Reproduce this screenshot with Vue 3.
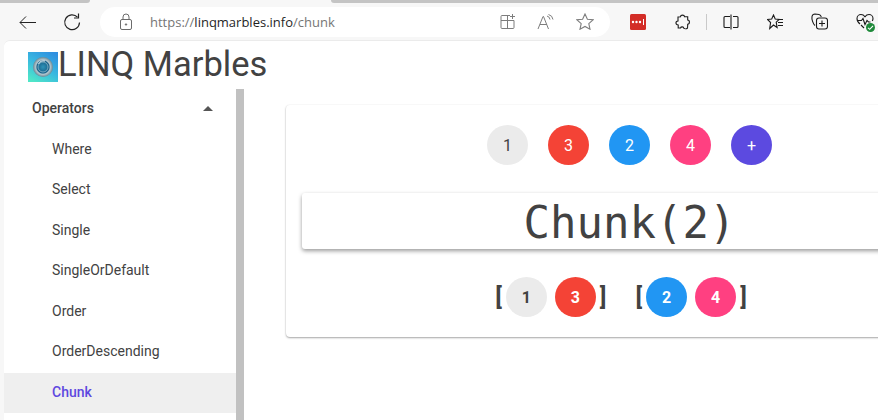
<template>
  <div class="window">
    <!-- browser chrome -->
    <div class="tabstrip">
      <span class="tab-edge left"></span>
      <span class="tab-edge right"></span>
    </div>
    <div class="toolbar">
      <button class="nav-btn">
        <svg width="20" height="20" viewBox="0 0 20 20" fill="none" stroke="#222" stroke-width="1">
          <path d="M2 10.500h16M8 4.500l-6 6 6 6" />
        </svg>
      </button>
      <button class="nav-btn reload">
        <svg width="20" height="20" viewBox="0 0 20 20" fill="none" stroke="#222" stroke-width="1.200">
          <path d="M15.500 5.200A7.400 7.400 0 1 0 17.500 10.500" />
          <path d="M16.500 1.500v4.500h-4.500" />
        </svg>
      </button>
      <div class="address">
        <svg class="lock" width="14" height="18" viewBox="0 0 14 18" fill="none" stroke="#6b6b6b" stroke-width="1">
          <rect x="1.500" y="6.500" width="11" height="10" rx="1.500" />
          <path d="M4 6.500V4a3 3 0 0 1 6 0v2.500" />
          <circle cx="7" cy="11.500" r="0.700" fill="#6b6b6b" />
        </svg>
        <span class="url"><span class="dim">https://</span>linqmarbles.info<span class="dim">/chunk</span></span>
        <div class="address-icons">
          <svg width="16" height="16" viewBox="0 0 16 16" fill="none" stroke="#7d7d7d" stroke-width="1">
            <path d="M10 1.500H2a1 1 0 0 0-1 1v11a1 1 0 0 0 1 1h11a1 1 0 0 0 1-1V6.500H1M7.500 1.500v13" />
            <path d="M12.500 0v5M10 2.500h5" />
          </svg>
          <svg width="18" height="16" viewBox="0 0 18 16" fill="none" stroke="#7d7d7d" stroke-width="1">
            <path d="M1 15L6 2.500h.5L11.500 15M3 10.500h7" />
            <path d="M10 2a4 4 0 0 1 3 3.500M11.500 0.500a6 6 0 0 1 4.500 5" />
          </svg>
          <svg width="18" height="17" viewBox="0 0 18 17" fill="none" stroke="#7d7d7d" stroke-width="1.100">
            <path d="M9 1l2.400 5.200 5.600.6-4.200 3.800 1.200 5.600L9 13.400l-5 2.800 1.200-5.600L1 6.800l5.600-.6z" />
          </svg>
        </div>
      </div>
      <div class="ext-icons">
        <svg class="ext lastpass" width="16" height="16" viewBox="0 0 16 16">
          <rect width="16" height="16" rx="1.500" fill="#d32d27" />
          <circle cx="3" cy="8" r="1.200" fill="#fff" />
          <circle cx="6.500" cy="8" r="1.200" fill="#fff" />
          <circle cx="10" cy="8" r="1.200" fill="#fff" />
          <rect x="13" y="5" width="1" height="6" fill="#fff" />
        </svg>
        <svg class="ext puzzle" width="16" height="16" viewBox="0 0 16 16" fill="none" stroke="#1c1c1c" stroke-width="1.100">
          <path d="M5.500 2.800c0-2.300 4-2.300 4 0h3.200v3.200c2.300 0 2.300 4.200 0 4.200 0 2.200-.2 3.800-.2 3.800-1 1-3 1-3.800.2 0-1.700-2.700-1.700-3.200-.2H3.200v-3c-2.900 0-3-3.800-.2-4V3z" />
        </svg>
        <span class="divider"></span>
        <svg class="ext split" width="16" height="16" viewBox="0 0 16 16" fill="none" stroke="#1c1c1c" stroke-width="1.100">
          <path d="M7 2.500H2a1 1 0 0 0-1 1v9a1 1 0 0 0 1 1h5M10 2.500h4a1 1 0 0 1 1 1v9a1 1 0 0 1-1 1h-4M8 0.500v15" />
        </svg>
        <svg class="ext favs" width="17" height="16" viewBox="0 0 17 16" fill="none" stroke="#1c1c1c" stroke-width="1.100">
          <path d="M6.500 1l1.700 4 4 .4-3 2.800.9 5.300-3.600-2.500-3.800 3.500.9-6L.5 5.500l4.200-.5z" />
          <path d="M11 5.500h5M11 8.500h5M11 11.500h5" />
        </svg>
        <svg class="ext collections" width="17" height="17" viewBox="0 0 17 17" fill="none" stroke="#1c1c1c" stroke-width="1.100">
          <path d="M4 12.500C2 11 .5 6 1 3.500 1.300 2 2.500 1 4 1l4 .5c1.300.2 2 1 2.300 2.500" />
          <rect x="5.500" y="5" width="11" height="11" rx="2.500" />
          <path d="M11 7.500v6M8 10.500h6" />
        </svg>
        <span class="health">
          <svg width="18" height="17" viewBox="0 0 18 17" fill="none" stroke="#1c1c1c" stroke-width="1.100">
            <path d="M4 11C2 9.500 1 8 1 5.500 1 3 3 1.500 5 1.500c1.700 0 3 .8 4 2.200 1-1.400 2.300-2.200 4-2.200 2 0 4 1.500 4 4 0 1-.3 1.800-.7 2.500" />
            <path d="M1 7.500h4.500l1.500-2 2 6 2-4 1.500 1.500h2" />
            <path d="M5 12l3 3" />
          </svg>
          <span class="ok">
            <svg width="7" height="7" viewBox="0 0 7 7" fill="none" stroke="#fff" stroke-width="1.100"><path d="M1 3.800l1.700 1.500L6 1.800" /></svg>
          </span>
        </span>
      </div>
    </div>

    <!-- page -->
    <div class="page">
      <header class="page-header">
        <svg class="logo" width="30" height="30" viewBox="0 0 30 30">
          <defs>
            <linearGradient id="logobg" x1="0.800" y1="0" x2="0.200" y2="1">
              <stop offset="0" stop-color="#2f8fe0" />
              <stop offset="0.500" stop-color="#39b8e0" />
              <stop offset="1" stop-color="#4fe6c8" />
            </linearGradient>
            <radialGradient id="marble">
              <stop offset="0" stop-color="#2f93b8" />
              <stop offset="0.600" stop-color="#17618a" />
              <stop offset="0.720" stop-color="#b5c8d0" />
              <stop offset="1" stop-color="#6a8794" />
            </radialGradient>
          </defs>
          <rect width="30" height="30" fill="url(#logobg)" />
          <circle cx="15" cy="15" r="10" fill="url(#marble)" />
          <circle cx="15" cy="15" r="5" fill="none" stroke="#9fc4d2" stroke-width="0.700" />
          <path d="M10.500 12a6 6 0 0 1 6.500-3" fill="none" stroke="#e6f2f6" stroke-width="1" />
        </svg>
        <h1>LINQ Marbles</h1>
      </header>

      <div class="page-body">
        <nav class="sidebar">
          <div class="group">
            <span>Operators</span>
            <i class="caret"></i>
          </div>
          <a
            v-for="item in operators"
            :key="item"
            class="nav-item"
            :class="{ active: item === selected }"
          >{{ item }}</a>
        </nav>

        <main class="content">
          <section class="card">
            <div class="marbles">
              <span
                v-for="m in source"
                :key="m.label"
                class="marble"
                :class="m.color"
              >{{ m.label }}</span>
            </div>
            <div class="banner">Chunk(2)</div>
            <div class="result">
              <div v-for="(chunk, i) in chunks" :key="i" class="chunk">
                <b class="bracket">[</b>
                <span
                  v-for="m in chunk"
                  :key="m.label"
                  class="marble bold"
                  :class="m.color"
                >{{ m.label }}</span>
                <b class="bracket">]</b>
              </div>
            </div>
          </section>
        </main>
      </div>
    </div>
  </div>
</template>

<script setup>
const operators = [
  'Where',
  'Select',
  'Single',
  'SingleOrDefault',
  'Order',
  'OrderDescending',
  'Chunk'
]
const selected = 'Chunk'

const source = [
  { label: '1', color: 'grey' },
  { label: '3', color: 'red' },
  { label: '2', color: 'blue' },
  { label: '4', color: 'pink' },
  { label: '+', color: 'purple' }
]

const chunks = [
  [{ label: '1', color: 'grey' }, { label: '3', color: 'red' }],
  [{ label: '2', color: 'blue' }, { label: '4', color: 'pink' }]
]
</script>

<style>
html, body {
  margin: 0;
  height: 100%;
  overflow: hidden;
  background: #fff;
}
</style>

<style scoped>
.window {
  width: 878px;
  height: 420px;
  display: flex;
  flex-direction: column;
  overflow: hidden;
  background: #f7f7f7;
  font-family: Roboto, sans-serif;
}

/* chrome */
.tabstrip {
  height: 3px;
  display: flex;
  justify-content: space-between;
  background: #f7f7f7;
}
.tab-edge {
  height: 3px;
  background: #c4c4c4;
}
.tab-edge.left {
  width: 90px;
  border-bottom-right-radius: 3px;
}
.tab-edge.right {
  width: 547px;
  border-bottom-left-radius: 3px;
}
.toolbar {
  height: 37px;
  flex: none;
  display: flex;
  align-items: center;
  padding-left: 18px;
  box-sizing: border-box;
}
.nav-btn {
  width: 20px;
  height: 20px;
  padding: 0;
  border: 0;
  background: none;
  display: flex;
}
.reload {
  margin-left: 24px;
}
.address {
  width: 510px;
  height: 30px;
  margin-left: 18px;
  box-sizing: border-box;
  background: #fff;
  border-radius: 15px;
  display: flex;
  align-items: center;
  padding-left: 19px;
}
.url {
  margin-left: 17px;
  font-family: "Open Sans", sans-serif;
  font-size: 13px;
  color: #1f1f1f;
}
.dim {
  color: #767676;
}
.address-icons {
  margin-left: auto;
  margin-right: 16px;
  display: flex;
  align-items: center;
  gap: 21px;
}
.ext-icons {
  display: flex;
  align-items: center;
  margin-left: 20px;
}
.ext {
  flex: none;
}
.puzzle {
  margin-left: 29px;
}
.divider {
  width: 1px;
  height: 16px;
  background: #c9c9c9;
  margin-left: 15px;
}
.split {
  margin-left: 16px;
}
.favs {
  margin-left: 28px;
}
.collections {
  margin-left: 27px;
}
.health {
  position: relative;
  display: flex;
  margin-left: 28px;
}
.ok {
  position: absolute;
  right: -1px;
  bottom: -2px;
  width: 9px;
  height: 9px;
  border-radius: 50%;
  background: #1f8a3b;
  display: flex;
  align-items: center;
  justify-content: center;
}

/* page */
.page {
  flex: 1;
  min-height: 0;
  margin-left: 4px;
  background: #fff;
  border-top: 1px solid #ebebeb;
  border-top-left-radius: 6px;
  display: flex;
  flex-direction: column;
}
.page-header {
  height: 48px;
  flex: none;
  display: flex;
  align-items: center;
  padding-left: 24px;
}
.logo {
  margin-top: 3px;
}
h1 {
  margin: 0;
  font-size: 34.500px;
  font-weight: 400;
  color: #424242;
  line-height: 48px;
  position: relative;
  top: -1px;
}
.page-body {
  flex: 1;
  min-height: 0;
  display: flex;
}
.sidebar {
  width: 232px;
  flex: none;
  border-right: 8px solid #c1c1c1;
  font-size: 14px;
  color: #424242;
}
.group {
  height: 40px;
  box-sizing: border-box;
  padding: 0 23px 2px 28px;
  display: flex;
  align-items: center;
  justify-content: space-between;
  font-weight: 500;
  margin-bottom: 0.500px;
}
.caret {
  width: 0;
  height: 0;
  border-left: 5px solid transparent;
  border-right: 5px solid transparent;
  border-bottom: 5px solid #555;
}
.nav-item {
  display: flex;
  align-items: center;
  height: 40.500px;
  box-sizing: border-box;
  padding: 0 0 2px 48px;
}
.nav-item.active {
  background: #efefef;
  color: #5e48e0;
  font-weight: 500;
}
.content {
  flex: 1;
  min-width: 0;
  padding: 16px 0 0 42px;
}
.card {
  width: 687px;
  height: 232px;
  box-sizing: border-box;
  padding: 20px 16px 0;
  background: #fff;
  border-radius: 4px;
  box-shadow: 0 1px 2px rgba(0, 0, 0, 0.35), 0 0 2px rgba(0, 0, 0, 0.05);
}
.marbles {
  display: flex;
  justify-content: center;
  gap: 20px;
}
.marble {
  width: 41px;
  height: 40px;
  border-radius: 50%;
  display: flex;
  align-items: center;
  justify-content: center;
  font-size: 16px;
  color: #fff;
  flex: none;
}
.marble.bold {
  font-weight: 700;
}
.grey {
  background: #ebebeb;
  color: #424242;
}
.red {
  background: #f44336;
}
.blue {
  background: #2196f3;
}
.pink {
  background: #ff4081;
}
.purple {
  background: #5c4ae0;
}
.banner {
  height: 56px;
  margin-top: 28px;
  background: #fff;
  border-radius: 3px;
  box-shadow: 0 2px 4px rgba(0, 0, 0, 0.4);
  text-align: center;
  font-family: "DejaVu Sans Mono", monospace;
  font-size: 44px;
  line-height: 59px;
  color: #424242;
}
.result {
  margin-top: 28px;
  display: flex;
  justify-content: center;
  gap: 37px;
  padding-right: 17px;
}
.chunk {
  display: flex;
  align-items: center;
  gap: 8px;
}
.bracket {
  font-size: 24px;
  color: #424242;
  font-weight: 700;
  margin: 0 -4px;
}
</style>
